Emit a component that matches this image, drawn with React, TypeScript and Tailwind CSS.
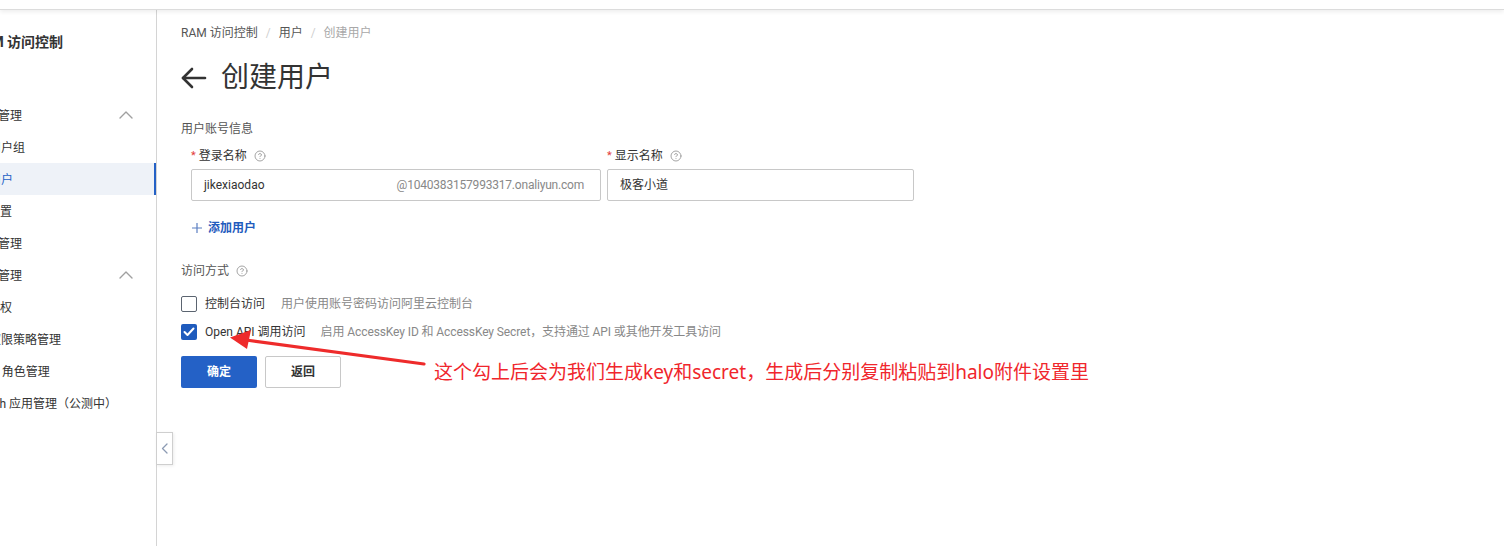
import React from "react";

const FONT = { fontFamily: 'Roboto, "Noto Sans CJK SC", sans-serif' };

function HelpIcon() {
  return (
    <svg width="12" height="12" viewBox="0 0 24 24" fill="none" stroke="#9a9a9a" strokeWidth="1.8" strokeLinecap="round" strokeLinejoin="round">
      <circle cx="12" cy="12" r="10" />
      <path d="M9.09 9a3 3 0 0 1 5.83 1c0 2-3 3-3 3" />
      <path d="M12 17h.01" />
    </svg>
  );
}

function ChevronUp() {
  return (
    <svg width="14" height="8" viewBox="0 0 14 8" fill="none" stroke="#a0a0a0" strokeWidth="1.4" strokeLinecap="round" strokeLinejoin="round">
      <path d="M1 7 L7 1 L13 7" />
    </svg>
  );
}

type Item = { text: string; ml: number; chevron?: boolean; selected?: boolean };

const items: Item[] = [
  { text: "身份管理", ml: -26, chevron: true },
  { text: "用户组", ml: -11 },
  { text: "用户", ml: -11, selected: true },
  { text: "设置", ml: -12 },
  { text: "身份管理", ml: -26 },
  { text: "权限管理", ml: -26, chevron: true },
  { text: "授权", ml: -12 },
  { text: "权限策略管理", ml: -11 },
  { text: "RAM 角色管理", ml: -27 },
  { text: "OAuth 应用管理（公测中）", ml: -27 },
];

function Sidebar() {
  return (
    <div className="w-[157px] shrink-0 border-r border-[#d4d4d4] overflow-hidden">
      <div className="pt-[22px] h-[20px] box-content leading-[20px] text-[14px] font-bold text-[#333] whitespace-nowrap">
        <span style={{ marginLeft: -27 }} className="inline-block">RAM 访问控制</span>
      </div>
      <div className="mt-[47px]">
        {items.map((it, i) => (
          <div
            key={i}
            className={
              "h-[32px] flex items-center pt-[2px] text-[12px] whitespace-nowrap relative " +
              (it.selected ? "bg-[#eef2f8] text-[#2461c6] border-r-2 border-[#2461c6]" : "text-[#333]")
            }
          >
            <span className="inline-block" style={{ marginLeft: it.ml }}>{it.text}</span>
            {it.chevron && (
              <div className="absolute left-[119px] top-[12px] flex">
                <ChevronUp />
              </div>
            )}
          </div>
        ))}
      </div>
    </div>
  );
}

function Checkbox({ checked }: { checked?: boolean }) {
  if (checked) {
    return (
      <div className="w-[16px] h-[16px] rounded-[2px] bg-[#1f5bbd] flex items-center justify-center shrink-0">
        <svg width="12" height="10" viewBox="0 0 12 10" fill="none" stroke="#fff" strokeWidth="2" strokeLinecap="round" strokeLinejoin="round">
          <path d="M1.5 5 L4.5 8 L10.5 1.5" />
        </svg>
      </div>
    );
  }
  return <div className="w-[16px] h-[16px] rounded-[2px] border border-[#5b6470] bg-white shrink-0" />;
}

function Main() {
  return (
    <div className="flex-1 pl-[24px] pt-[14px] text-[12px] text-[#333]">
      {/* breadcrumb */}
      <div className="h-[18px] flex items-center text-[12px] whitespace-nowrap">
        <span className="text-[#555]">RAM 访问控制</span>
        <span className="mx-[8px] text-[#cfcfcf]">/</span>
        <span className="text-[#555]">用户</span>
        <span className="mx-[8px] text-[#cfcfcf]">/</span>
        <span className="text-[#a8a8a8]">创建用户</span>
      </div>
      {/* title */}
      <div className="mt-[16px] h-[40px] flex items-center">
        <svg width="26" height="24" viewBox="0 0 26 24" fill="none" stroke="#333" strokeWidth="2.6" strokeLinecap="round" strokeLinejoin="round">
          <path d="M2 12 H24" />
          <path d="M11 3 L2 12 L11 21" />
        </svg>
        <span className="ml-[14px] text-[28px] leading-[40px] text-[#333]">创建用户</span>
      </div>
      <div className="mt-[22px] h-[18px] leading-[18px] text-[#555]">用户账号信息</div>
      {/* name fields */}
      <div className="pl-[10px] mt-[9px] flex gap-[6px]">
        <div className="w-[410px]">
          <div className="h-[18px] flex items-center">
            <span className="text-[#e23a3a] text-[11px] mr-[3px]">*</span>
            <span className="text-[#333]">登录名称</span>
            <span className="ml-[7px] flex"><HelpIcon /></span>
          </div>
          <div className="mt-[4px] h-[32px] border border-[#c8c8c8] rounded-[2px] flex items-center justify-between pl-[12px] pr-[16px]">
            <span className="text-[#333]">jikexiaodao</span>
            <span className="text-[#888] tracking-[-0.2px]">@1040383157993317.onaliyun.com</span>
          </div>
        </div>
        <div className="w-[307px]">
          <div className="h-[18px] flex items-center">
            <span className="text-[#e23a3a] text-[11px] mr-[3px]">*</span>
            <span className="text-[#333]">显示名称</span>
            <span className="ml-[7px] flex"><HelpIcon /></span>
          </div>
          <div className="mt-[4px] h-[32px] border border-[#c8c8c8] rounded-[2px] flex items-center pl-[12px]">
            <span className="text-[#333]">极客小道</span>
          </div>
        </div>
      </div>
      {/* add user */}
      <div className="pl-[11px] mt-[18px] h-[18px] flex items-center">
        <svg width="10" height="10" viewBox="0 0 10 10" fill="none" stroke="#5b7fc2" strokeWidth="1.2">
          <path d="M5 0 V10 M0 5 H10" />
        </svg>
        <span className="ml-[6px] text-[#1f5bbd] font-bold">添加用户</span>
      </div>
      {/* access */}
      <div className="mt-[25px] h-[18px] flex items-center">
        <span className="text-[#555]">访问方式</span>
        <span className="ml-[7px] flex"><HelpIcon /></span>
      </div>
      <div className="mt-[14px] h-[20px] flex items-center whitespace-nowrap">
        <Checkbox />
        <span className="ml-[8px] text-[#333]">控制台访问</span>
        <span className="ml-[16px] text-[#888]">用户使用账号密码访问阿里云控制台</span>
      </div>
      <div className="mt-[8px] h-[20px] flex items-center whitespace-nowrap">
        <Checkbox checked />
        <span className="ml-[8px] text-[#333]">Open API 调用访问</span>
        <span className="ml-[15px] text-[#888] tracking-[-0.1px]">启用 AccessKey ID 和 AccessKey Secret，支持通过 API 或其他开发工具访问</span>
      </div>
      {/* buttons */}
      <div className="mt-[14px] flex gap-[8px]">
        <div className="w-[76px] h-[32px] rounded-[2px] bg-[#2461c6] text-white font-bold flex items-center justify-center">确定</div>
        <div className="w-[76px] h-[32px] rounded-[2px] border border-[#c8c8c8] bg-white text-[#333] font-bold flex items-center justify-center">返回</div>
      </div>
    </div>
  );
}

export default function App() {
  return (
    <div className="relative w-[1504px] h-[546px] overflow-hidden bg-white" style={FONT}>
      <div className="relative z-10 h-[10px] bg-white border-b border-[#dcdcdc] shadow-[0_2px_4px_rgba(0,0,0,0.07)]" />
      <div className="flex h-[536px]">
        <Sidebar />
        <Main />
      </div>

      {/* collapse handle */}
      <div className="absolute left-[156px] top-[432px] w-[17px] h-[33px] bg-white border border-[#cfcfcf] shadow-[1px_1px_3px_rgba(0,0,0,0.08)] flex items-center justify-center">
        <svg width="7" height="11" viewBox="0 0 7 11" fill="none" stroke="#8c9bb3" strokeWidth="1.3" strokeLinecap="round" strokeLinejoin="round">
          <path d="M6 1 L1.5 5.5 L6 10" />
        </svg>
      </div>

      {/* annotation arrow */}
      <svg className="absolute left-0 top-0 pointer-events-none" width="1504" height="546" viewBox="0 0 1504 546">
        <path d="M424 364 L246 340" stroke="#ee2b2b" strokeWidth="3.2" strokeLinecap="round" />
        <polygon points="230,337.5 251,330 247,349" fill="#ee2b2b" />
      </svg>
      <div
        className="absolute left-[434px] top-[359px] text-[19px] leading-[26px] text-[#f0262c] whitespace-nowrap"
        style={{ fontFamily: '"Noto Sans", "Noto Sans CJK SC", sans-serif' }}
      >
        这个勾上后会为我们生成key和secret，生成后分别复制粘贴到halo附件设置里
      </div>
    </div>
  );
}
